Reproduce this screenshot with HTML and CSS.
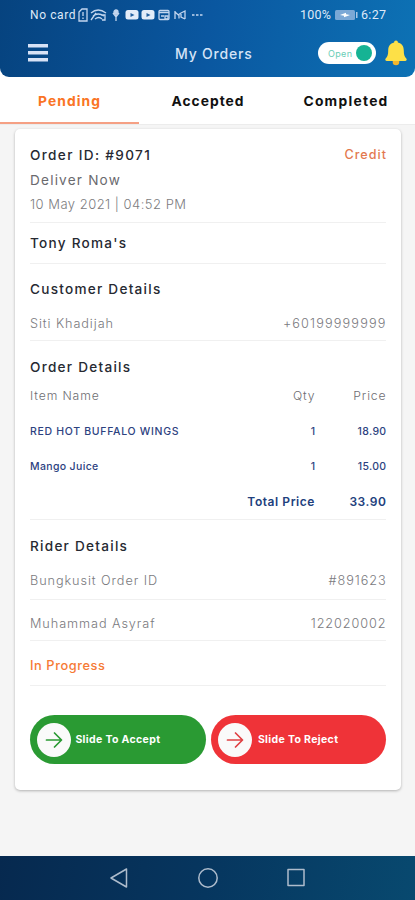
FILE: index.html
```html
<!DOCTYPE html>
<html lang="en">
<head>
<meta charset="utf-8">
<meta name="viewport" content="width=device-width">
<title>My Orders</title>
<link rel="stylesheet" href="styles.css">
</head>
<body>
<header class="header">
  <div class="status">
    <span class="carrier">No card</span>
    <svg class="status-icons" width="128" height="14" viewBox="0 0 128 14" fill="none" stroke="#c3d6ef" stroke-width="1.3">
      <path d="M2 4l3-3h5v12H2zM6 4v4M6 9.500v1.500"/>
      <path d="M14 5q7-6 15 0M16 8q5-4 11 0M18 11q4-3 7 0M14 12l5-7M24 7h4v5h-3"/>
      <path d="M39 2v11M36 5l3 4 3-4"/><circle cx="39" cy="4" r="2" fill="#c3d6ef"/>
      <rect x="48.500" y="2" width="13" height="9.500" rx="2.500" fill="#e4edf9" stroke="none"/><path d="M53.500 5v4l4-2z" fill="#24619f" stroke="none"/>
      <rect x="64.500" y="2" width="13" height="9.500" rx="2.500" fill="#e4edf9" stroke="none"/><path d="M69.500 5v4l4-2z" fill="#24619f" stroke="none"/>
      <rect x="82" y="2.500" width="10" height="9" rx="1"/><path d="M82 4.500h10M84 8h3M88 8h3v3h-3z"/>
      <path d="M98 3v8M98 4l4 3.500v3M101 7l3-2 4-2v8M104 6v3l4 2"/>
      <path d="M115 7h2.500M119 7h2.500M123 7h2.500" stroke-width="1.600"/>
    </svg>
    <span class="percent">100%</span>
    <svg class="battery" width="23" height="12" viewBox="0 0 23 12"><rect x="0" y="1" width="20" height="10" rx="1.500" fill="#7ba8d6"/><rect x="21" y="3" width="1.500" height="6" fill="#a9c7e8"/><path d="M5 6l4-1.500 2-.8v1.600l4 .7-4 1.500-2 .8V6.700z" fill="#fff"/></svg>
    <span class="time">6:27</span>
  </div>
  <div class="bar">
    <svg class="menu" width="20" height="18" viewBox="0 0 20 18" fill="#d7e2f6"><path d="M0 0h20v3.500H0zM0 7h20v3.500H0zM0 14h20v3.500H0z"/></svg>
    <h1 class="title">My Orders</h1>
    <div class="toggle"><span>Open</span><i class="knob"></i></div>
    <svg class="bell" width="22" height="26" viewBox="0 0 22 26"><circle cx="11" cy="22" r="3.300" fill="#f4b62b"/><path d="M11 .5c1.200 0 1.900.8 1.900 2 3.900.9 5.900 3.800 5.900 8 0 4 .6 6.200 2.500 8 .8.900.4 2.500-1 2.500H1.700c-1.400 0-1.800-1.600-1-2.500 1.900-1.800 2.500-4 2.500-8 0-4.200 2-7.100 5.900-8 0-1.200.7-2 1.900-2z" fill="#fde047"/></svg>
  </div>
</header>
<nav class="tabs">
  <div class="tab active"><span class="t-pending">Pending</span></div>
  <div class="tab"><span class="t-accepted">Accepted</span></div>
  <div class="tab"><span class="t-completed">Completed</span></div>
</nav>
<main class="content">
  <article class="card">
    <section class="block summary">
      <div class="row order"><h2>Order ID: #9071</h2><span class="credit">Credit</span></div>
      <div class="row deliver">Deliver Now</div>
      <div class="row date">10 May 2021 | 04:52 PM</div>
    </section>
    <section class="block shop"><h2>Tony Roma's</h2></section>
    <section class="block customer">
      <h2>Customer Details</h2>
      <div class="row info"><span>Siti Khadijah</span><span class="phone">+60199999999</span></div>
    </section>
    <section class="block items">
      <h2>Order Details</h2>
      <div class="grid head"><span>Item Name</span><span>Qty</span><span>Price</span></div>
      <div class="grid item first"><span class="wings">RED HOT BUFFALO WINGS</span><span>1</span><span>18.90</span></div>
      <div class="grid item"><span>Mango Juice</span><span>1</span><span>15.00</span></div>
      <div class="grid total"><span class="total-label">Total Price</span><span>33.90</span></div>
    </section>
    <section class="block rider">
      <h2>Rider Details</h2>
      <div class="row info"><span>Bungkusit Order ID</span><span>#891623</span></div>
    </section>
    <section class="block person"><div class="row info"><span>Muhammad Asyraf</span><span>122020002</span></div></section>
    <section class="block progress">In Progress</section>
    <div class="actions">
      <div class="slide accept"><i class="disc"><svg width="18" height="18" viewBox="0 0 18 18"><path d="M1.500 9h14.500M9.500 2l7 7-7 7"/></svg></i><span>Slide To Accept</span></div>
      <div class="slide reject"><i class="disc"><svg width="18" height="18" viewBox="0 0 18 18"><path d="M1.500 9h14.500M9.500 2l7 7-7 7"/></svg></i><span>Slide To Reject</span></div>
    </div>
  </article>
</main>
<footer class="navbar">
  <svg width="20" height="22" viewBox="0 0 20 22"><path d="M17.500 2v18L2 11z"/></svg>
  <svg width="22" height="22" viewBox="0 0 22 22"><circle cx="11" cy="11" r="9.200"/></svg>
  <svg width="20" height="22" viewBox="0 0 20 22"><rect x="2" y="2.500" width="16" height="16"/></svg>
</footer>
</body>
</html>
```
FILE: styles.css
```css
* { box-sizing: border-box; }
body {
  margin: 0; width: 415px; height: 900px; overflow: hidden;
  display: flex; flex-direction: column;
  background: #fff; font-family: Inter, "Liberation Sans", sans-serif;
}
h1, h2 { margin: 0; }
span { white-space: nowrap; }
.header {
  height: 77px; flex: none; color: #dfe9f8;
  border-radius: 0 0 9px 9px;
  background: linear-gradient(100deg, #06437f 0%, #0a57a0 50%, #0d72b5 100%);
}
.status {
  height: 29px; padding-left: 30px; display: flex; align-items: center;
  font: 400 12px Roboto, sans-serif;
}
.carrier { width: 47px; letter-spacing: .6px; }
.status-icons { flex: none; }
.percent { margin-left: 95px; width: 35px; font-size: 12.5px; letter-spacing: .26px; }
.battery { flex: none; }
.time { margin-left: 3px; font-size: 12.5px; letter-spacing: .3px; }
.bar { height: 48px; padding: 0 8px 0 28px; display: flex; align-items: center; }
.menu { flex: none; }
.title { margin-left: 127px; width: 143px; font-size: 14px; font-weight: 500; letter-spacing: .8px; color: #d5e3f6; }
.toggle {
  width: 58px; height: 22px; flex: none; border-radius: 11px; background: #fff;
  display: flex; align-items: center; justify-content: space-between;
  padding: 0 4px 0 10px; color: #68cdb5; font-size: 9px; letter-spacing: .34px;
}
.knob { width: 16px; height: 16px; border-radius: 50%; background: #16b394; }
.bell { flex: none; margin-left: 9px; }

.tabs { height: 48px; flex: none; display: grid; grid-template-columns: 139px 138px 138px; border-bottom: 1px solid #ececec; }
.tab { display: flex; justify-content: center; align-items: center; font-size: 13.8px; font-weight: 700; color: #111; }
.active { color: #fa7424; border-bottom: 2px solid #f5a084; }
.t-pending { letter-spacing: 1.1px; padding-top: 2px; }
.t-accepted { letter-spacing: 1px; }
.t-completed { letter-spacing: 1.27px; }

.content { flex: 1; background: #f5f5f5; padding: 4px 14px 0 15px; }
.card {
  height: 661px; padding: 14px 15px 0; background: #fff; border-radius: 5px;
  box-shadow: 0 1px 3px rgba(0, 0, 0, .28);
}
.block { border-bottom: 1px solid #f0f0f0; }
.block h2 { height: 24px; line-height: 24px; font-size: 13.6px; font-weight: 500; letter-spacing: 1.25px; color: #262932; }
.row { display: flex; justify-content: space-between; align-items: center; }
.summary { height: 80px; }
.order { height: 24px; }
.order h2 { letter-spacing: 1.34px; }
.credit { font-size: 12.6px; font-weight: 500; letter-spacing: 1px; margin: -1px -1px 0 0; color: #e3794f; }
.deliver { height: 26px; font-size: 13.6px; letter-spacing: 1.2px; color: #6a6a6e; }
.date { height: 22px; font-size: 13px; font-weight: 300; letter-spacing: .48px; color: #7c7c80; }
.shop { height: 41px; padding-top: 8px; }
.customer { height: 77px; padding-top: 13px; }
.info { height: 34px; font-size: 12.7px; font-weight: 300; letter-spacing: .92px; color: #7a7a7e; }
.info span:last-child { margin-right: -.5px; }
.customer .info { margin-top: 5px; }
.info .phone { letter-spacing: 1.15px; }
.items { height: 179px; padding-top: 14px; }
.grid { display: grid; grid-template-columns: 1fr 60px 71px; align-items: center; }
.grid span:not(:first-child) { text-align: right; margin-right: -.5px; }
.head { height: 32px; margin-bottom: 2px; font-size: 12.2px; font-weight: 300; letter-spacing: .88px; color: #6d6d72; }
.item { height: 34px; font-size: 10.5px; font-weight: 500; letter-spacing: .35px; color: #2d427f; }
.first { height: 36px; }
.wings { letter-spacing: .69px; }
.total { height: 36px; grid-template-columns: 1fr 71px; font-size: 12px; font-weight: 600; letter-spacing: .56px; color: #21407d; }
.total .total-label { text-align: right; }
.rider { height: 80px; padding-top: 14px; }
.rider .info { margin-top: 5px; }
.person { height: 41px; padding-top: 6px; }
.progress { height: 45px; padding-top: 16px; line-height: 18px; font-size: 12.8px; font-weight: 500; letter-spacing: .58px; color: #f67a35; }
.actions { display: flex; gap: 5px; padding-top: 29px; }
.slide {
  width: 175.5px; height: 49px; border-radius: 25px; flex: none;
  display: flex; align-items: center; gap: 4px; padding-left: 7.4px;
  color: #fff; font-size: 10.5px; font-weight: 700; letter-spacing: .35px;
}
.accept { background: #2a9a33; }
.reject { background: #ef3338; gap: 6px; }
.disc { width: 34px; height: 34px; border-radius: 50%; background: #fafafa; display: flex; align-items: center; justify-content: center; }
.disc svg { fill: none; stroke: #2a9a33; stroke-width: 1.7; stroke-linecap: round; stroke-linejoin: round; }
.reject .disc svg { stroke: #df4144; }

.navbar {
  height: 44px; flex: none; padding: 0 109px;
  display: flex; align-items: center; justify-content: space-between;
  background: linear-gradient(100deg, #06294f 0%, #06365f 50%, #08496f 100%);
}
.navbar svg { fill: none; stroke: #aebccc; stroke-width: 1.5; stroke-linejoin: round; }
```
